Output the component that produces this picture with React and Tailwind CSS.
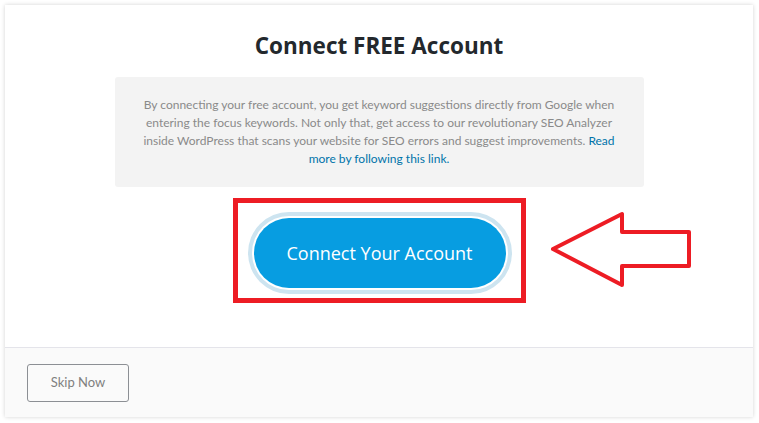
export default function App() {
  return (
    <div className="w-[759px] h-[423px] bg-white p-[5px] font-['Open_Sans',sans-serif]">
      <div className="relative w-[748px] h-[412px] bg-white shadow-[0_0_4px_rgba(0,0,0,0.18)] flex flex-col">
        {/* body */}
        <div className="flex-1 flex flex-col items-center">
          <h1 className="mt-[25px] text-[22.5px] leading-[32px] font-bold text-[#23282d]">Connect FREE Account</h1>
          <div className="mt-[15px] w-[529px] h-[110px] rounded-[3px] bg-[#f3f3f3] flex items-center justify-center">
            <p className="w-[486px] text-center text-[12px] leading-[18px] text-[#8a8a8a] font-['Lato',sans-serif]">
              By connecting your free account, you get keyword suggestions directly from Google when entering the focus keywords. Not only that, get access to our revolutionary SEO Analyzer inside WordPress that scans your website for SEO errors and suggest improvements.{' '}
              <a href="#" className="text-[#0073aa]">Read more by following this link.</a>
            </p>
          </div>
          <div className="mt-[11px] w-[293px] h-[105px] border-[5px] border-[#ed1c24] flex items-center justify-center pl-[1px] pt-[5px]">
            <button className="w-[252px] h-[70px] rounded-full bg-[#079de1] text-white text-[18px] shadow-[0_0_0_2px_#ffffff,0_0_0_6px_#cde4f0]">
              Connect Your Account
            </button>
          </div>
        </div>
        {/* footer */}
        <div className="h-[70px] border-t border-[#e4e4ea] bg-[#fafafa] flex items-center px-[22px]">
          <button className="w-[102px] h-[38px] border border-[#8c8f94] rounded-[3px] bg-[#fafafa] text-[13px] text-[#808080] font-['Lato',sans-serif]">
            Skip Now
          </button>
        </div>
        {/* arrow annotation */}
        <svg className="absolute left-[538px] top-[199px]" width="152" height="86" viewBox="0 0 152 86">
          <path d="M10 45 L79 10 L79 28 L146 28 L146 62 L79 62 L79 81 Z" fill="none" stroke="#ed1c24" strokeWidth="4" strokeLinejoin="round" />
        </svg>
      </div>
    </div>
  );
}
